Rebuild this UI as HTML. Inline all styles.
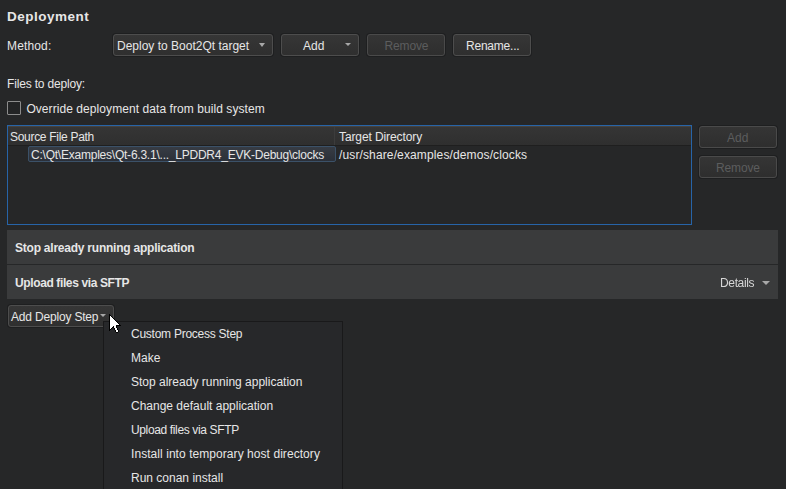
<!DOCTYPE html>
<html><head><meta charset="utf-8">
<style>
html,body{margin:0;padding:0;}
body{width:786px;height:489px;overflow:hidden;background:#262728;position:relative;font-family:"Liberation Sans",sans-serif;font-size:12px;color:#e6e6e6;}
.t{position:absolute;line-height:14px;white-space:pre;}
.b{font-weight:bold;}
.btn{position:absolute;box-sizing:border-box;border:1px solid #4d4d4d;border-radius:3px;background:linear-gradient(#363636,#2f2f2f);box-shadow:0 0 0 1px #1e1f20;}
.btn.dis{border-color:#4a4a4a;background:linear-gradient(#353535,#2e2e2e);}
.dis-t{color:#5c5d5e;}
.arr{position:absolute;width:0;height:0;border-left:3.6px solid transparent;border-right:3.6px solid transparent;border-top:4.2px solid #a8a8a8;}
.arr.s{border-left-width:3px;border-right-width:3px;border-top-width:3px;}
.panel{position:absolute;left:7px;width:771px;background:#3a3b3c;}
.menu{position:absolute;left:103px;top:321px;width:240px;height:200px;box-sizing:border-box;border:1px solid #19191a;background:#27282a;}
</style></head><body>

<div class="t b" style="left:7px;top:10px;font-size:13.5px;letter-spacing:0.5px;">Deployment</div>
<div class="t" style="left:7px;top:39px;letter-spacing:0.15px;">Method:</div>

<!-- combo -->
<div class="btn" style="left:113px;top:34px;width:160px;height:22px;"></div>
<div class="t" style="left:117px;top:39px;">Deploy to Boot2Qt target</div>
<div class="arr" style="left:259px;top:43px;"></div>

<!-- Add -->
<div class="btn" style="left:281px;top:34px;width:78px;height:22px;"></div>
<div class="t" style="left:303px;top:39px;">Add</div>
<div class="arr s" style="left:345px;top:43px;"></div>

<!-- Remove -->
<div class="btn dis" style="left:367px;top:34px;width:78px;height:22px;"></div>
<div class="t dis-t" style="left:384.5px;top:39px;letter-spacing:-0.15px;">Remove</div>

<!-- Rename -->
<div class="btn" style="left:453px;top:34px;width:78px;height:22px;"></div>
<div class="t" style="left:466px;top:39px;letter-spacing:-0.22px;">Rename...</div>

<div class="t" style="left:7px;top:77px;letter-spacing:-0.17px;">Files to deploy:</div>

<!-- checkbox -->
<div style="position:absolute;left:7px;top:101px;width:14px;height:14px;box-sizing:border-box;border:1px solid #8c8c8c;border-radius:1px;background:#232425;"></div>
<div class="t" style="left:26.4px;top:102px;letter-spacing:0.07px;">Override deployment data from build system</div>

<!-- table -->
<div style="position:absolute;left:7px;top:125px;width:685px;height:100px;box-sizing:border-box;border:1px solid #2764a8;background:#262728;"></div>
<div style="position:absolute;left:8px;top:126px;width:683px;height:20px;background:linear-gradient(#353535,#2f2f2f);border-top:1px solid #47423d;box-sizing:border-box;border-bottom:1px solid #1f1f1f;"></div>
<div style="position:absolute;left:334px;top:127px;width:1px;height:18px;background:#3c3c3c;"></div>
<div class="t" style="left:10px;top:130px;letter-spacing:-0.3px;">Source File Path</div>
<div class="t" style="left:339px;top:130px;letter-spacing:-0.1px;">Target Directory</div>
<div style="position:absolute;left:28px;top:146px;width:308px;height:16px;box-sizing:border-box;border:1px solid #3b5168;border-radius:2px;background:linear-gradient(#373c44,#2b3039);"></div>
<div class="t" style="left:31px;top:148px;letter-spacing:-0.23px;">C:\Qt\Examples\Qt-6.3.1\..._LPDDR4_EVK-Debug\clocks</div>
<div class="t" style="left:339px;top:148px;letter-spacing:0.13px;">/usr/share/examples/demos/clocks</div>

<!-- side buttons -->
<div class="btn dis" style="left:699px;top:126px;width:78px;height:22px;"></div>
<div class="t dis-t" style="left:727px;top:131px;">Add</div>
<div class="btn dis" style="left:699px;top:156px;width:78px;height:22px;"></div>
<div class="t dis-t" style="left:716px;top:161px;letter-spacing:-0.15px;">Remove</div>

<!-- panels -->
<div class="panel" style="top:230px;height:34px;"></div>
<div style="position:absolute;left:7px;top:264px;width:771px;height:1px;background:#262728;"></div>
<div class="panel" style="top:265px;height:34px;"></div>
<div class="t b" style="left:15px;top:241px;letter-spacing:-0.23px;">Stop already running application</div>
<div class="t b" style="left:15px;top:276px;letter-spacing:-0.38px;">Upload files via SFTP</div>
<div class="t" style="left:720px;top:276px;color:#d6d6d6;letter-spacing:-0.35px;will-change:transform;">Details</div>
<div class="arr" style="left:761.5px;top:281px;border-left-width:4px;border-right-width:4px;border-top-width:4.8px;"></div>

<!-- Add deploy step -->
<div class="btn" style="left:8px;top:305px;width:106px;height:22px;"></div>
<div class="t" style="left:11px;top:310px;letter-spacing:-0.18px;">Add Deploy Step</div>
<div class="arr s" style="left:100px;top:314px;"></div>

<!-- menu -->
<div class="menu"></div>
<div class="t" style="left:131px;top:327px;letter-spacing:-0.25px;">Custom Process Step</div>
<div class="t" style="left:131px;top:351px;">Make</div>
<div class="t" style="left:131px;top:375px;">Stop already running application</div>
<div class="t" style="left:131px;top:399px;">Change default application</div>
<div class="t" style="left:131px;top:423px;letter-spacing:-0.36px;">Upload files via SFTP</div>
<div class="t" style="left:131px;top:447px;letter-spacing:0.06px;">Install into temporary host directory</div>
<div class="t" style="left:131px;top:471px;">Run conan install</div>

<!-- cursor -->
<svg style="position:absolute;left:109px;top:314px;" width="12" height="19" viewBox="0 0 12 19" shape-rendering="crispEdges"><path d="M0 0h1v1h-1zM0 1h2v1h-2zM0 2h1v1h-1zM2 2h1v1h-1zM0 3h1v1h-1zM3 3h1v1h-1zM0 4h1v1h-1zM4 4h1v1h-1zM0 5h1v1h-1zM5 5h1v1h-1zM0 6h1v1h-1zM6 6h1v1h-1zM0 7h1v1h-1zM7 7h1v1h-1zM0 8h1v1h-1zM8 8h1v1h-1zM0 9h1v1h-1zM9 9h1v1h-1zM0 10h1v1h-1zM10 10h1v1h-1zM0 11h1v1h-1zM7 11h5v1h-5zM0 12h1v1h-1zM4 12h1v1h-1zM7 12h1v1h-1zM0 13h1v1h-1zM3 13h2v1h-2zM7 13h1v1h-1zM0 14h1v1h-1zM2 14h1v1h-1zM5 14h1v1h-1zM8 14h1v1h-1zM0 15h2v1h-2zM5 15h1v1h-1zM8 15h1v1h-1zM0 16h1v1h-1zM6 16h1v1h-1zM9 16h1v1h-1zM6 17h1v1h-1zM9 17h1v1h-1zM7 18h2v1h-2z" fill="#000"/><path d="M1 2h1v1h-1zM1 3h2v1h-2zM1 4h3v1h-3zM1 5h4v1h-4zM1 6h5v1h-5zM1 7h6v1h-6zM1 8h7v1h-7zM1 9h8v1h-8zM1 10h9v1h-9zM1 11h6v1h-6zM1 12h3v1h-3zM5 12h2v1h-2zM1 13h2v1h-2zM5 13h2v1h-2zM1 14h1v1h-1zM6 14h2v1h-2zM6 15h2v1h-2zM7 16h2v1h-2zM7 17h2v1h-2z" fill="#fff"/></svg>

</body></html>
